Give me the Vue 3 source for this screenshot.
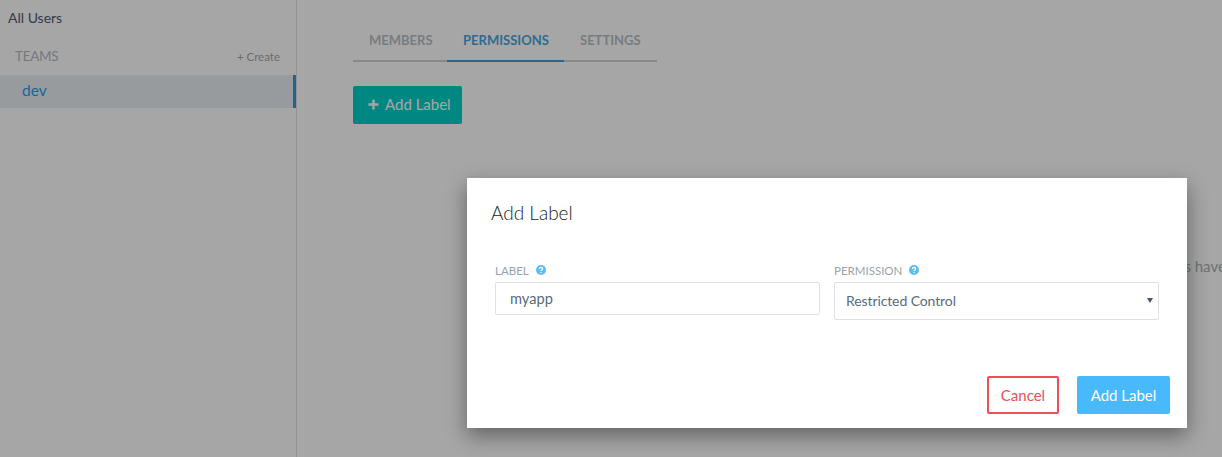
<template>
  <div class="page">
    <aside class="sidebar">
      <div class="all-users">All Users</div>
      <div class="teams-head">
        <span class="teams-title">TEAMS</span>
        <span class="create">+ Create</span>
      </div>
      <div class="team-row">dev</div>
    </aside>

    <main class="content">
      <nav class="tabs">
        <span v-for="tab in tabs" :key="tab" :class="['tab', { active: tab === 'PERMISSIONS' }]">{{ tab }}</span>
      </nav>
      <button class="add-btn" type="button">
        <svg class="plus" width="11" height="11" viewBox="0 0 11 11">
          <path d="M5.5 0.5v10M0.5 5.5h10" stroke="currentColor" stroke-width="2.4" fill="none" />
        </svg>
        Add Label
      </button>
      <p class="empty">No labels have been added</p>
    </main>

    <div class="overlay"></div>

    <section class="modal">
      <h2 class="modal-title">Add Label</h2>
      <div class="fields">
        <div class="field">
          <div class="field-label">
            LABEL
            <svg class="help" width="10" height="10" viewBox="0 0 10 10">
              <circle cx="5" cy="5" r="5" fill="#5cbcf5" />
              <path d="M3.4 3.9C3.4 2.9 4.1 2.4 5 2.4s1.6.5 1.6 1.3c0 1.2-1.6 1.2-1.6 2.3" stroke="#fff" stroke-width="1.2" fill="none" />
              <circle cx="5" cy="7.5" r=".75" fill="#fff" />
            </svg>
          </div>
          <div class="input">myapp</div>
        </div>
        <div class="field">
          <div class="field-label">
            PERMISSION
            <svg class="help" width="10" height="10" viewBox="0 0 10 10">
              <circle cx="5" cy="5" r="5" fill="#5cbcf5" />
              <path d="M3.4 3.9C3.4 2.9 4.1 2.4 5 2.4s1.6.5 1.6 1.3c0 1.2-1.6 1.2-1.6 2.3" stroke="#fff" stroke-width="1.2" fill="none" />
              <circle cx="5" cy="7.5" r=".75" fill="#fff" />
            </svg>
          </div>
          <div class="select">
            Restricted Control
            <svg class="caret" width="6" height="5" viewBox="0 0 6 5"><path d="M0 0h6L3 5z" fill="#44566a" /></svg>
          </div>
        </div>
      </div>
      <div class="actions">
        <button class="cancel" type="button">Cancel</button>
        <button class="confirm" type="button">Add Label</button>
      </div>
    </section>
  </div>
</template>

<script setup>
const tabs = ['MEMBERS', 'PERMISSIONS', 'SETTINGS']
</script>

<style>
html, body {
  margin: 0;
  overflow: hidden;
}
</style>

<style scoped>
.page {
  display: flex;
  width: 1222px;
  height: 457px;
  position: relative;
  overflow: hidden;
  background: #fff;
  font-family: Lato, "Open Sans", sans-serif;
  color: #44566a;
}

.sidebar {
  width: 296px;
  flex: none;
  border-right: 1px solid #e4e4e4;
}

.all-users {
  padding: 9px 0 0 8px;
  font-size: 14px;
  line-height: 17px;
  color: #4d5e70;
}

.teams-head {
  display: flex;
  justify-content: space-between;
  align-items: center;
  padding: 17px 16px 6px 15px;
  height: 26px;
}

.teams-title {
  font-size: 13.5px;
  letter-spacing: -0.3px;
  color: #b4bbc2;
}

.create {
  font-size: 11.5px;
  color: #a0a7ae;
}

.team-row {
  height: 33px;
  line-height: 31px;
  padding-left: 22px;
  font-size: 15.5px;
  color: #1f9fe8;
  background: #e9eff2;
  border-right: 3px solid #1f9fe8;
}

.content {
  flex: 1;
  padding: 24px 0 0 56px;
  min-width: 0;
}

.tabs {
  display: inline-grid;
  grid-template-columns: 94px 117px 93px;
  border-bottom: 2px solid #d0d3d6;
  height: 36px;
  width: 304px;
}

.tab {
  padding-left: 16px;
  font-size: 13px;
  line-height: 33px;
  font-weight: 700;
  white-space: nowrap;
  color: #b8bfc6;
  height: 36px;
}

.tab.active {
  color: #4aa6e0;
  border-bottom: 2px solid #38a0e0;
}

.add-btn {
  display: flex;
  align-items: center;
  width: 109px;
  height: 38px;
  margin-top: 24px;
  padding: 0 0 2px 15px;
  border: 0;
  border-radius: 2px;
  background: #00d0c8;
  color: #fff;
  font: 15px Lato, sans-serif;
}

.plus {
  margin-right: 6px;
}

.empty {
  margin: 133px 0 0 777px;
  font-size: 15px;
  white-space: nowrap;
  color: #a9b0b6;
}

.overlay {
  position: absolute;
  inset: 0;
  background: rgba(0, 0, 0, 0.35);
}

.modal {
  position: absolute;
  left: 467px;
  top: 178px;
  width: 720px;
  height: 250px;
  box-sizing: border-box;
  padding: 23px 17px 14px 24px;
  display: flex;
  flex-direction: column;
  background: #fff;
  box-shadow: 0 8px 20px rgba(0, 0, 0, 0.4);
}

.modal-title {
  margin: 0;
  font-size: 19px;
  line-height: 24px;
  font-weight: 300;
  color: #222;
}

.fields {
  display: flex;
  gap: 14px;
  margin: 36px 11px 0 4px;
  align-items: flex-start;
}

.field {
  flex: 1;
}

.field-label {
  display: flex;
  align-items: center;
  gap: 7px;
  height: 18px;
  font-size: 11.5px;
  color: #99a3ad;
  margin-bottom: 3px;
}

.input,
.select {
  box-sizing: border-box;
  border: 1px solid #dfe1e3;
  border-radius: 2px;
  color: #5a6b7c;
}

.input {
  height: 33px;
  line-height: 31px;
  padding-left: 14px;
  font-size: 14.6px;
}

.select {
  position: relative;
  height: 38px;
  line-height: 36px;
  padding-left: 11px;
  font-size: 14px;
  letter-spacing: -0.1px;
}

.caret {
  position: absolute;
  right: 5px;
  top: 15px;
}

.actions {
  display: flex;
  justify-content: flex-end;
  gap: 18px;
  margin-top: auto;
}

.cancel,
.confirm {
  height: 38px;
  border-radius: 2px;
  font: 15px Lato, sans-serif;
}

.cancel {
  width: 72px;
  background: #fff;
  border: 2px solid #f04e58;
  color: #f04e58;
}

.confirm {
  width: 93px;
  background: #48b9fb;
  border: 0;
  color: #fff;
}
</style>
